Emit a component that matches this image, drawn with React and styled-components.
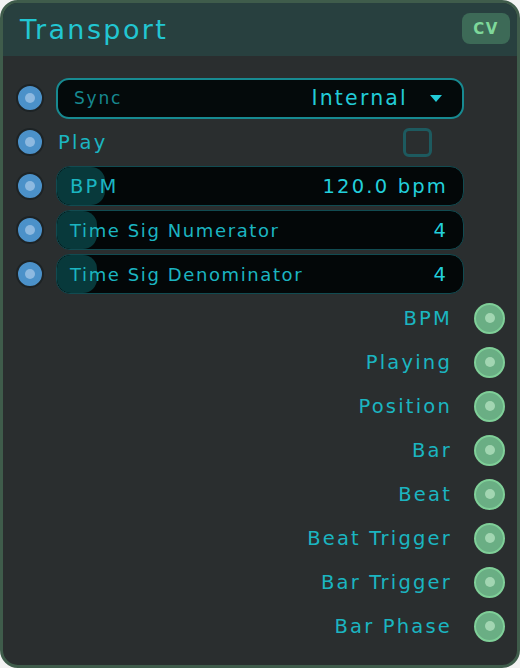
import React from 'react';
import styled, { createGlobalStyle } from 'styled-components';

const inputs = [
  { type: 'select', label: 'Sync', value: 'Internal' },
  { type: 'toggle', label: 'Play' },
  { type: 'slider', label: 'BPM', value: '120.0 bpm', fill: 48 },
  { type: 'slider', label: 'Time Sig Numerator', value: '4', fill: 40 },
  { type: 'slider', label: 'Time Sig Denominator', value: '4', fill: 40 },
];

const outputs = ['BPM', 'Playing', 'Position', 'Bar', 'Beat', 'Beat Trigger', 'Bar Trigger', 'Bar Phase'];

const GlobalStyle = createGlobalStyle`
  body {
    margin: 0;
    background: #f2f2f2;
    font-family: "DejaVu Sans", "Noto Sans", sans-serif;
  }
`;

const App = () => (
  <>
    <GlobalStyle />
    <Node>
      <Header>
        <Title>Transport</Title>
        <Badge>CV</Badge>
      </Header>
      <Body>
        {inputs.map((inp) => (
          <InputRow key={inp.label}>
            <InPort />
            {inp.type === 'select' && (
              <Select>
                <SelectLabel>Sync</SelectLabel>
                <SelectValue>
                  {inp.value}
                  <Caret />
                </SelectValue>
              </Select>
            )}
            {inp.type === 'toggle' && (
              <Toggle>
                <Label>{inp.label}</Label>
                <CheckBox />
              </Toggle>
            )}
            {inp.type === 'slider' && (
              <Slider>
                <SliderFill style={{ width: inp.fill }} />
                <Label $small={inp.label.length > 3}>{inp.label}</Label>
                <Value>{inp.value}</Value>
              </Slider>
            )}
          </InputRow>
        ))}
        {outputs.map((name) => (
          <OutputRow key={name}>
            <Label>{name}</Label>
            <OutPort />
          </OutputRow>
        ))}
      </Body>
    </Node>
  </>
);

const Node = styled.div`
  width: 520px;
  height: 668px;
  box-sizing: border-box;
  border: 3px solid #3f5c4b;
  border-radius: 18px;
  background: #2a2e2f;
  overflow: hidden;
`;

const Header = styled.div`
  height: 53px;
  background: #28403f;
  display: flex;
  align-items: center;
  justify-content: space-between;
  padding: 0 7px 0 17px;
`;

const Title = styled.h1`
  margin: 0;
  font-size: 27px;
  font-weight: normal;
  letter-spacing: 2.4px;
  color: #22c6d2;
`;

const Badge = styled.span`
  width: 48px;
  height: 31px;
  margin-top: -2px;
  border-radius: 8px;
  background: #3d6a57;
  color: #7ed89a;
  font-size: 15px;
  font-weight: bold;
  letter-spacing: 1.5px;
  display: flex;
  align-items: center;
  justify-content: center;
`;

const Body = styled.div`
  padding: 20px 12px 0 13px;
`;

const InputRow = styled.div`
  height: 44px;
  display: flex;
  align-items: center;
  gap: 12px;
`;

const OutputRow = styled.div`
  height: 44px;
  display: flex;
  align-items: center;
  justify-content: flex-end;
  gap: 22px;
`;

const Port = styled.span`
  position: relative;
  flex: none;
  border-radius: 50%;
  box-sizing: border-box;
  &::after {
    content: '';
    position: absolute;
    left: 50%;
    top: 50%;
    width: 10px;
    height: 10px;
    margin: -5px 0 0 -5px;
    border-radius: 50%;
  }
`;

const InPort = styled(Port)`
  width: 28px;
  height: 28px;
  background: #4b91c9;
  border: 2px solid #1d2325;
  &::after {
    background: #8db9e0;
  }
`;

const OutPort = styled(Port)`
  width: 31px;
  height: 31px;
  background: #6aae84;
  border: 2px solid #7fcf98;
  &::after {
    background: #a2d6b2;
  }
`;

const Label = styled.span`
  position: relative;
  font-size: ${(p) => (p.$small ? '18px' : '19.5px')};
  letter-spacing: ${(p) => (p.$small ? '1.6px' : '2.2px')};
  color: #1bb5c1;
  white-space: nowrap;
`;

const Value = styled(Label)`
  color: #22cfdb;
`;

const Select = styled.div`
  width: 408px;
  height: 41px;
  box-sizing: border-box;
  border: 2px solid #178a91;
  border-radius: 13px;
  background: #040a0b;
  display: flex;
  align-items: center;
  justify-content: space-between;
  padding: 0 20px 0 16px;
`;

const SelectLabel = styled.span`
  font-size: 17px;
  letter-spacing: 1.8px;
  color: #178890;
`;

const SelectValue = styled.span`
  display: flex;
  align-items: center;
  gap: 22px;
  font-size: 20.5px;
  letter-spacing: 2.2px;
  color: #22cbd7;
`;

const Caret = styled.span`
  width: 0;
  height: 0;
  border-left: 6px solid transparent;
  border-right: 6px solid transparent;
  border-top: 7px solid #22cbd7;
`;

const Toggle = styled.div`
  width: 408px;
  display: flex;
  align-items: center;
  justify-content: space-between;
  padding: 0 32px 0 2px;
  box-sizing: border-box;
`;

const CheckBox = styled.span`
  width: 29px;
  height: 29px;
  box-sizing: border-box;
  border: 3px solid #1d5a5f;
  border-radius: 6px;
`;

const Slider = styled.div`
  position: relative;
  width: 408px;
  height: 40px;
  box-sizing: border-box;
  border: 1px solid #114b51;
  border-radius: 14px;
  background: #030708;
  display: flex;
  align-items: center;
  justify-content: space-between;
  padding: 0 15px 0 13px;
  overflow: hidden;
`;

const SliderFill = styled.span`
  position: absolute;
  left: 0;
  top: 0;
  bottom: 0;
  border-radius: 14px;
  background: #08393b;
`;

export default App;
